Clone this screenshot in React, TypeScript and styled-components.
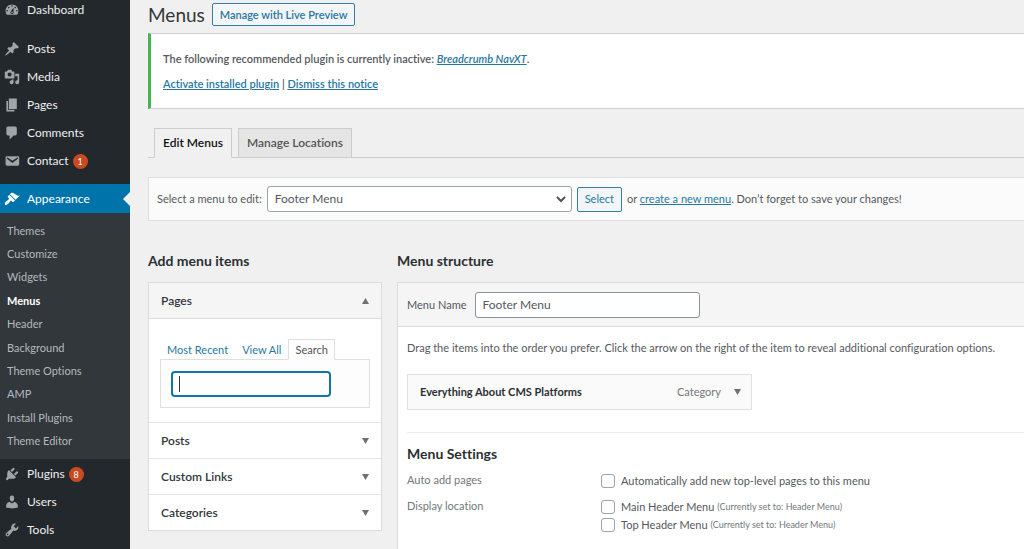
import React from 'react';
import styled, { createGlobalStyle, css } from 'styled-components';

const Global = createGlobalStyle`
  *, *::before, *::after { box-sizing: border-box; }
  body {
    margin: 0;
    background: #f0f0f0;
    color: #55595e;
    font: 11px/16px Lato, "Noto Sans", sans-serif;
    font-variant-ligatures: none;
  }
  button, input, select { font: inherit; color: inherit; }
  h1, h2, h3, p, ul { margin: 0; padding: 0; }
  ul { list-style: none; }
  a { color: #2678a3; }
`;

const Shell = styled.div`
  display: flex;
  min-height: 100vh;
`;

/* ---------- sidebar ---------- */

const Sidebar = styled.nav`
  flex: 0 0 130px;
  background: #23282d;
`;

const MenuGroup = styled.ul`
  padding-bottom: 9px;
`;

const MenuLink = styled.a<{ $current?: boolean; $first?: boolean }>`
  position: relative;
  display: flex;
  align-items: center;
  height: ${(p) => (p.$first ? 20 : p.$current ? 29 : 28)}px;
  padding-left: 4px;
  gap: 7px;
  font-size: 12px;
  text-decoration: none;
  color: ${(p) => (p.$current ? '#fff' : '#eee')};
  background: ${(p) => (p.$current ? '#0073aa' : 'transparent')};

  svg {
    width: 16px;
    height: 16px;
    fill: ${(p) => (p.$current ? '#fff' : '#a0a5aa')};
  }

  ${(p) =>
    p.$current &&
    css`
      &::after {
        content: '';
        position: absolute;
        right: 0;
        border: 7px solid transparent;
        border-right-color: #f0f0f0;
        border-left-width: 0;
      }
    `}
`;

const FirstGroup = styled(MenuGroup)`
  padding-bottom: 15px;
`;

const Count = styled.span`
  min-width: 15px;
  height: 15px;
  margin-left: -3px;
  border-radius: 8px;
  background: #ca4a1f;
  color: #fff;
  font-size: 9px;
  line-height: 15px;
  text-align: center;
`;

const Submenu = styled.ul`
  display: grid;
  grid-auto-rows: 1fr;
  height: 246px;
  margin-bottom: 1px;
  padding: 6px 0;
  background: #32373c;
`;

const SubLink = styled.a<{ $current?: boolean }>`
  display: flex;
  align-items: center;
  height: 100%;
  padding-left: 7px;
  text-decoration: none;
  color: ${(p) => (p.$current ? '#fff' : '#b4b9be')};
  font-weight: ${(p) => (p.$current ? 700 : 400)};
`;

/* ---------- main ---------- */

const Main = styled.main`
  flex: 1;
  min-width: 0;
  display: flex;
  flex-direction: column;
  padding: 3px 0 0 18px;
`;

const TitleRow = styled.header`
  display: flex;
  align-items: center;
  gap: 7px;
  height: 23px;
`;

const Title = styled.h1`
  font-size: 19px;
  line-height: 23px;
  font-weight: 400;
  color: #32373c;
`;

const Button = styled.button<{ $strong?: boolean }>`
  height: ${(p) => (p.$strong ? 23 : 25)}px;
  padding: 0 7px;
  border: 1px solid #2f7fa8;
  border-radius: 2px;
  background: #f3f5f6;
  color: #2678a3;
  font-weight: ${(p) => (p.$strong ? 600 : 400)};
  line-height: 16px;
  white-space: nowrap;
`;

const Notice = styled.section`
  display: flex;
  flex-direction: column;
  gap: 9px;
  margin-top: 7px;
  padding: 17px 12px 16px;
  border: 1px solid #ccd0d4;
  border-left: 3px solid #46b450;
  border-right: 0;
  background: #fff;
  font-weight: 600;
`;

const Tabs = styled.div`
  display: flex;
  gap: 6px;
  margin-top: 19px;
  padding-left: 6px;
  border-bottom: 1px solid #ccc;
`;

const Tab = styled.button<{ $active?: boolean }>`
  height: 30px;
  margin-bottom: -1px;
  padding: 0 8px;
  border: 1px solid #ccc;
  border-bottom-color: ${(p) => (p.$active ? '#f0f0f0' : '#ccc')};
  background: ${(p) => (p.$active ? '#f0f0f0' : '#e5e5e5')};
  color: ${(p) => (p.$active ? '#111' : '#555')};
  font-size: 12px;
  font-weight: 600;
`;

const ManageBar = styled.form`
  display: flex;
  align-items: center;
  gap: 5px;
  margin-top: 19px;
  height: 44px;
  padding-left: 8px;
  border: 1px solid #dfdfdf;
  border-right: 0;
  background: #fbfbfb;
  white-space: nowrap;
`;

const SelectWrap = styled.span`
  position: relative;
  display: block;
  width: 305px;

  svg {
    position: absolute;
    right: 6px;
    top: 8px;
    width: 10px;
    height: 10px;
    pointer-events: none;
  }
`;

const Select = styled.select`
  display: block;
  appearance: none;
  width: 100%;
  height: 26px;
  padding: 0 7px;
  border: 1px solid #9ea3a8;
  border-radius: 3px;
  background: #fff;
  font-size: 12px;
`;

const Columns = styled.div`
  flex: 1;
  display: flex;
  gap: 15px;
  margin-top: 30px;
`;

const LeftColumn = styled.section`
  flex: 0 0 234px;
`;

const RightColumn = styled.section`
  flex: 1;
  min-width: 0;
  display: flex;
  flex-direction: column;
`;

const Heading = styled.h2`
  font-size: 14px;
  line-height: 20px;
  font-weight: 700;
  color: #2b3035;
`;

const Accordion = styled.div`
  margin-top: 11px;
  border: 1px solid #dcdcde;
  background: #fff;
`;

const AccordionHead = styled.button<{ $open?: boolean }>`
  display: flex;
  align-items: center;
  justify-content: space-between;
  width: 100%;
  height: 36px;
  padding: 0 12px;
  border: 0;
  border-bottom: 1px solid ${(p) => (p.$open ? '#dcdcde' : 'transparent')};
  background: ${(p) => (p.$open ? '#f5f5f5' : '#fff')};
  color: #32373c;
  font-size: 12px;
  font-weight: 600;
`;

const AccordionItem = styled.div`
  & + & {
    border-top: 1px solid #e5e5e5;
  }
  & + & ${AccordionHead} {
    height: 35px;
    border-bottom: 0;
  }
`;

const Arrow = styled.svg`
  width: 7px;
  height: 6px;
  fill: #6c7177;
`;

const AccordionBody = styled.div`
  padding: 20px 11px 14px;
`;

const SmallTabs = styled.div`
  display: flex;
`;

const SmallTab = styled.button<{ $active?: boolean }>`
  height: 21px;
  margin-bottom: -1px;
  padding: 0 6px;
  border: 1px solid ${(p) => (p.$active ? '#dfdfdf' : 'transparent')};
  border-bottom-color: ${(p) => (p.$active ? '#fdfdfd' : 'transparent')};
  background: ${(p) => (p.$active ? '#fdfdfd' : 'transparent')};
  color: ${(p) => (p.$active ? '#50545a' : '#2678a3')};
  white-space: nowrap;
`;

const SearchPanel = styled.div`
  padding: 11px 10px 10px;
  border: 1px solid #dfdfdf;
  background: #fdfdfd;
`;

const SearchField = styled.div`
  position: relative;
  width: 160px;

  &::after {
    content: '';
    position: absolute;
    left: 8px;
    top: 5px;
    width: 1px;
    height: 16px;
    background: #32373c;
  }
`;

const SearchInput = styled.input`
  display: block;
  width: 100%;
  height: 26px;
  padding: 0 7px;
  border: 2px solid #0f76ab;
  border-radius: 4px;
  background: #fff;
  font-size: 12px;
  caret-color: transparent;
  outline: 0;
`;

const Structure = styled.div`
  flex: 1;
  margin-top: 11px;
  border: 1px solid #dcdcde;
  border-width: 1px 0 0 1px;
  background: #fff;
`;

const NameBar = styled.div`
  display: flex;
  align-items: center;
  gap: 8px;
  height: 44px;
  padding-left: 9px;
  border-bottom: 1px solid #dcdcde;
  background: #f5f5f5;
`;

const NameInput = styled.input`
  width: 225px;
  height: 26px;
  padding: 0 7px;
  border: 1px solid #8c9196;
  border-radius: 3px;
  background: #fff;
  font-size: 12px;
`;

const StructureBody = styled.div`
  padding: 13px 0 12px 9px;
`;

const MenuItemBar = styled.div`
  display: flex;
  align-items: center;
  width: 345px;
  height: 36px;
  margin-top: 18px;
  padding: 0 10px 0 12px;
  border: 1px solid #dfdfdf;
  background: #fafafa;
`;

const ItemTitle = styled.strong`
  flex: 1;
  color: #2b3035;
  font-weight: 700;
`;

const ItemType = styled.span`
  margin-right: 13px;
  color: #72777c;
`;

const Settings = styled.div`
  margin-top: 22px;
  padding-top: 11px;
  border-top: 1px solid #eee;
`;

const SettingRow = styled.fieldset`
  display: grid;
  grid-template-columns: 194px 1fr;
  margin: 8px 0 0;
  padding: 0;
  border: 0;
`;

const SettingName = styled.span`
  color: #72777c;
`;

const Options = styled.div`
  display: flex;
  flex-direction: column;
`;

const Option = styled.label`
  display: flex;
  align-items: center;
  height: 18px;
`;

const Check = styled.input`
  appearance: none;
  width: 14px;
  height: 14px;
  margin: 0 6px 0 0;
  border: 1px solid #9ea3a8;
  border-radius: 3px;
  background: #fff;
`;

const Note = styled.small`
  margin-left: 3px;
  color: #72777c;
  font-size: 9px;
`;

/* ---------- icons, on a 20 unit grid ---------- */

const icons = {
  dashboard:
    'M3.76 16h12.48c1.1-1.37 1.76-3.11 1.76-5 0-4.42-3.58-8-8-8s-8 3.58-8 8c0 1.89.66 3.63 1.76 5zM10 4c.55 0 1 .45 1 1s-.45 1-1 1-1-.45-1-1 .45-1 1-1zM6 6c.55 0 1 .45 1 1s-.45 1-1 1-1-.45-1-1 .45-1 1-1zm8 0c.55 0 1 .45 1 1s-.45 1-1 1-1-.45-1-1 .45-1 1-1zm-5.37 5.55L12 7v6c0 1.1-.9 2-2 2s-2-.9-2-2c0-.57.24-1.08.63-1.45zM4 10c.55 0 1 .45 1 1s-.45 1-1 1-1-.45-1-1 .45-1 1-1zm12 0c.55 0 1 .45 1 1s-.45 1-1 1-1-.45-1-1 .45-1 1-1zm-5 3c0-.55-.45-1-1-1s-1 .45-1 1 .45 1 1 1 1-.45 1-1z',
  posts:
    'M10.44 3.02l1.82-1.82 6.36 6.35-1.83 1.82c-1.05-.68-2.48-.57-3.41.36l-.75.75c-.92.93-1.04 2.35-.35 3.41l-1.83 1.82-2.41-2.41-2.8 2.79c-.42.42-3.38 2.71-3.8 2.29s1.86-3.39 2.28-3.81l2.79-2.79L4.1 9.36l1.83-1.82c1.05.69 2.48.57 3.4-.36l.75-.75c.93-.92 1.05-2.35.36-3.41z',
  media:
    'M13 11V4c0-.55-.45-1-1-1h-1.67L9 1H5L3.67 3H2c-.55 0-1 .45-1 1v7c0 .55.45 1 1 1h10c.55 0 1-.45 1-1zM7 4.5c1.38 0 2.5 1.12 2.5 2.5S8.38 9.5 7 9.5 4.5 8.38 4.5 7 5.62 4.5 7 4.5zM14 6h5v10.5c0 1.38-1.12 2.5-2.5 2.5S14 17.88 14 16.5s1.12-2.5 2.5-2.5c.17 0 .34.02.5.05V9h-3V6zm-4 8.05V13h2v3.5c0 1.38-1.12 2.5-2.5 2.5S7 17.88 7 16.5 8.12 14 9.5 14c.17 0 .34.02.5.05z',
  pages: 'M6 15V2h10v13H6zm-1 1h8v2H3V5h2v11z',
  comments:
    'M5 2h9c1.1 0 2 .9 2 2v7c0 1.1-.9 2-2 2h-2l-5 5v-5H5c-1.1 0-2-.9-2-2V4c0-1.1.9-2 2-2z',
  contact:
    'M3.87 4h13.25C18.37 4 19 4.59 19 5.79v8.42c0 1.19-.63 1.79-1.88 1.79H3.87c-1.25 0-1.88-.6-1.88-1.79V5.79c0-1.2.63-1.79 1.88-1.79zm6.62 8.6l6.74-5.53c.24-.2.43-.66.13-1.07-.29-.41-.82-.42-1.17-.17l-5.7 3.86L4.8 5.83c-.35-.25-.88-.24-1.17.17-.3.41-.11.87.13 1.07z',
  appearance:
    'M14.48 11.06L7.41 3.99l1.5-1.5c.5-.56 2.3-.47 3.51.32 1.21.8 1.43 1.28 2.91 2.1 1.18.64 2.45 1.26 4.45.85zm-.71.71L6.7 4.7 4.93 6.47c-.39.39-.39 1.02 0 1.41l1.06 1.06c.39.39.39 1.03 0 1.42-.6.6-1.43 1.11-2.21 1.69-.35.26-.7.53-1.01.84C1.43 14.23.4 16.08 1.4 17.07c.99 1 2.84-.03 4.18-1.36.31-.31.58-.66.85-1.02.57-.78 1.08-1.61 1.69-2.21.39-.39 1.02-.39 1.41 0l1.06 1.06c.39.39 1.02.39 1.41 0z',
  plugins:
    'M13.11 4.36L9.87 7.6 8 5.73l3.24-3.24c.35-.34 1.05-.2 1.56.32.52.51.66 1.21.31 1.55zm-8 1.77l.91-1.12 9.01 9.01-1.19.84c-.71.71-2.63 1.16-3.82 1.16H6.14L4.9 17.26c-.59.59-1.54.59-2.12 0-.59-.58-.59-1.53 0-2.12l1.24-1.24v-3.88c0-1.13.4-3.19 1.09-3.89zm7.26 3.97l3.24-3.24c.34-.35 1.04-.21 1.55.31.52.51.66 1.21.31 1.55l-3.24 3.25z',
  users:
    'M10 9.25c-2.27 0-2.73-3.44-2.73-3.44C7 4.02 7.82 2 9.97 2c2.16 0 2.98 2.02 2.71 3.81 0 0-.41 3.44-2.68 3.44zm0 2.57L12.72 10c2.39 0 4.52 2.33 4.52 4.53v2.49s-3.65 1.13-7.24 1.13c-3.65 0-7.24-1.13-7.24-1.13v-2.49c0-2.25 1.94-4.48 4.47-4.48z',
  tools:
    'M16.68 9.77c-1.34 1.34-3.3 1.67-4.95.99l-5.41 6.52c-.99.99-2.59.99-3.58 0s-.99-2.59 0-3.57l6.52-5.42c-.68-1.65-.35-3.61.99-4.95 1.28-1.28 3.12-1.62 4.72-1.06l-2.89 2.89 2.82 2.82 2.86-2.87c.53 1.58.18 3.39-1.08 4.65zM3.81 16.21c.4.39 1.04.39 1.43 0 .4-.4.4-1.04 0-1.43-.39-.4-1.03-.4-1.43 0-.39.39-.39 1.03 0 1.43z',
};

type IconName = keyof typeof icons;

type EntryProps = {
  icon: IconName;
  label: string;
  count?: number;
  current?: boolean;
  first?: boolean;
};

const Entry = ({ icon, label, count, current, first }: EntryProps) => (
  <li>
    <MenuLink href="#" $current={current} $first={first}>
      <svg viewBox="0 0 20 20" aria-hidden="true">
        <path d={icons[icon]} />
      </svg>
      {label}
      {count !== undefined && <Count>{count}</Count>}
    </MenuLink>
  </li>
);

const Triangle = ({ up }: { up?: boolean }) => (
  <Arrow viewBox="0 0 7 6" aria-hidden="true">
    <path d={up ? 'M0 6L3.5 0L7 6z' : 'M0 0H7L3.5 6z'} />
  </Arrow>
);

const submenu = [
  'Themes',
  'Customize',
  'Widgets',
  'Menus',
  'Header',
  'Background',
  'Theme Options',
  'AMP',
  'Install Plugins',
  'Theme Editor',
];

export default function App() {
  return (
    <>
      <Global />
      <Shell>
        <Sidebar>
          <FirstGroup>
            <Entry icon="dashboard" label="Dashboard" first />
          </FirstGroup>
          <MenuGroup>
            <Entry icon="posts" label="Posts" />
            <Entry icon="media" label="Media" />
            <Entry icon="pages" label="Pages" />
            <Entry icon="comments" label="Comments" />
            <Entry icon="contact" label="Contact" count={1} />
          </MenuGroup>
          <ul>
            <Entry icon="appearance" label="Appearance" current />
            <li>
              <Submenu>
                {submenu.map((name) => (
                  <li key={name}>
                    <SubLink href="#" $current={name === 'Menus'}>
                      {name}
                    </SubLink>
                  </li>
                ))}
              </Submenu>
            </li>
            <Entry icon="plugins" label="Plugins" count={8} />
            <Entry icon="users" label="Users" />
            <Entry icon="tools" label="Tools" />
          </ul>
        </Sidebar>

        <Main>
          <TitleRow>
            <Title>Menus</Title>
            <Button type="button" $strong>
              Manage with Live Preview
            </Button>
          </TitleRow>

          <Notice>
            <p>
              The following recommended plugin is currently inactive:{' '}
              <a href="#">
                <em>Breadcrumb NavXT</em>
              </a>
              .
            </p>
            <p>
              <a href="#">Activate installed plugin</a> | <a href="#">Dismiss this notice</a>
            </p>
          </Notice>

          <Tabs>
            <Tab type="button" $active>
              Edit Menus
            </Tab>
            <Tab type="button">Manage Locations</Tab>
          </Tabs>

          <ManageBar>
            <label htmlFor="menu-select">Select a menu to edit:</label>
            <SelectWrap>
              <Select id="menu-select" defaultValue="footer">
                <option value="footer">Footer Menu</option>
              </Select>
              <svg viewBox="0 0 10 10" fill="none" stroke="#50545a" strokeWidth="2" aria-hidden="true">
                <path d="M1 3L5 7L9 3" />
              </svg>
            </SelectWrap>
            <Button type="button">Select</Button>
            <span>
              or <a href="#">create a new menu</a>. Don’t forget to save your changes!
            </span>
          </ManageBar>

          <Columns>
            <LeftColumn>
              <Heading>Add menu items</Heading>
              <Accordion>
                <AccordionItem>
                  <AccordionHead type="button" $open aria-expanded="true">
                    Pages
                    <Triangle up />
                  </AccordionHead>
                  <AccordionBody>
                    <SmallTabs>
                      <SmallTab type="button">Most Recent</SmallTab>
                      <SmallTab type="button">View All</SmallTab>
                      <SmallTab type="button" $active>
                        Search
                      </SmallTab>
                    </SmallTabs>
                    <SearchPanel>
                      <SearchField>
                        <SearchInput type="text" aria-label="Search" />
                      </SearchField>
                    </SearchPanel>
                  </AccordionBody>
                </AccordionItem>
                {['Posts', 'Custom Links', 'Categories'].map((name) => (
                  <AccordionItem key={name}>
                    <AccordionHead type="button" aria-expanded="false">
                      {name}
                      <Triangle />
                    </AccordionHead>
                  </AccordionItem>
                ))}
              </Accordion>
            </LeftColumn>

            <RightColumn>
              <Heading>Menu structure</Heading>
              <Structure>
                <NameBar>
                  <label htmlFor="menu-name">Menu Name</label>
                  <NameInput id="menu-name" type="text" defaultValue="Footer Menu" />
                </NameBar>
                <StructureBody>
                  <p>
                    Drag the items into the order you prefer. Click the arrow on the right of the
                    item to reveal additional configuration options.
                  </p>
                  <MenuItemBar>
                    <ItemTitle>Everything About CMS Platforms</ItemTitle>
                    <ItemType>Category</ItemType>
                    <Triangle />
                  </MenuItemBar>
                  <Settings>
                    <Heading as="h3">Menu Settings</Heading>
                    <SettingRow>
                      <SettingName>Auto add pages</SettingName>
                      <Options>
                        <Option>
                          <Check type="checkbox" />
                          Automatically add new top-level pages to this menu
                        </Option>
                      </Options>
                    </SettingRow>
                    <SettingRow>
                      <SettingName>Display location</SettingName>
                      <Options>
                        <Option>
                          <Check type="checkbox" />
                          Main Header Menu
                          <Note>(Currently set to: Header Menu)</Note>
                        </Option>
                        <Option>
                          <Check type="checkbox" />
                          Top Header Menu
                          <Note>(Currently set to: Header Menu)</Note>
                        </Option>
                      </Options>
                    </SettingRow>
                  </Settings>
                </StructureBody>
              </Structure>
            </RightColumn>
          </Columns>
        </Main>
      </Shell>
    </>
  );
}
